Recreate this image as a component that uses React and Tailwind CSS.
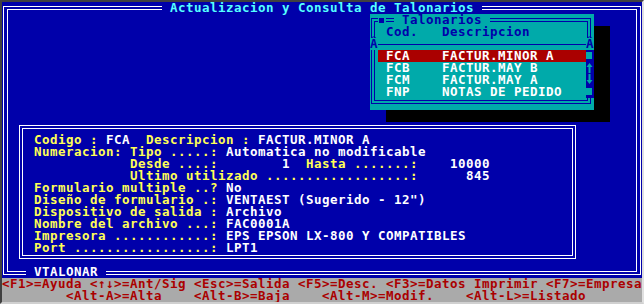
import React from "react";

const Y = "text-[#ffff55]";
const W = "text-white";

const detailRows = [
  [[Y, "Codigo : "], [W, "FCA"], [Y, "  Descripcion : "], [W, "FACTUR.MINOR A"]],
  [[Y, "Numeracion: Tipo .....: "], [W, "Automatica no modificable"]],
  [[Y, "            Desde ....: "], [W, "       1"], [Y, "  Hasta .......: "], [W, "   10000"]],
  [[Y, "            Ultimo utilizado ..................: "], [W, "     845"]],
  [[Y, "Formulario multiple ..? "], [W, "No"]],
  [[Y, "Diseño de formulario .: "], [W, 'VENTAEST (Sugerido - 12")']],
  [[Y, "Dispositivo de salida : "], [W, "Archivo"]],
  [[Y, "Nombre del archivo ...: "], [W, "FAC0001A"]],
  [[Y, "Impresora ............: "], [W, "EPS EPSON LX-800 Y COMPATIBLES"]],
  [[Y, "Port .................: "], [W, "LPT1"]],
];

const items = [
  ["FCA", "FACTUR.MINOR A"],
  ["FCB", "FACTUR.MAY B"],
  ["FCM", "FACTUR.MAY A"],
  ["FNP", "NOTAS DE PEDIDO"],
];

function Line({ segs }) {
  return (
    <div className="h-[12px] whitespace-pre">
      {segs.map(([c, t], i) => (
        <span key={i} className={c}>
          {t}
        </span>
      ))}
    </div>
  );
}

function ArrowUp() {
  return (
    <svg width="8" height="12" viewBox="0 0 8 12" className="block">
      <polygon points="3.5,1 0.5,5 6.5,5" fill="#00aaaa" />
      <rect x="2.5" y="4" width="2" height="7" fill="#00aaaa" />
    </svg>
  );
}

function ArrowDown() {
  return (
    <svg width="8" height="12" viewBox="0 0 8 12" className="block">
      <rect x="2.5" y="0" width="2" height="6" fill="#00aaaa" />
      <polygon points="3.5,10 0.5,6 6.5,6" fill="#00aaaa" />
    </svg>
  );
}

function Popup() {
  return (
    <div className="absolute left-[368px] top-[12px] w-[224px] h-[96px] bg-[#00aaaa] shadow-[16px_12px_0_0_#000] pt-[4px] pl-[1px] pr-[3px] pb-[6px] text-[#0000aa]">
      <div className="h-full border border-[#0000aa] p-[2px]">
        <div className="h-full border border-[#0000aa] pt-[4px] flex flex-col">
          <div className="ml-[3px] h-[12px] whitespace-pre"> Cod.   Descripcion</div>
          <div className="h-[12px] flex items-start pt-[6px]">
            <div className="h-px w-full bg-[#0000aa]" />
          </div>
          {items.map(([c, d], i) => (
            <div
              key={c}
              className={
                "ml-[3px] h-[12px] whitespace-pre text-white " +
                (i === 0 ? "bg-[#aa0000]" : "")
              }
            >
              {" " + c + "    " + d}
            </div>
          ))}
        </div>
      </div>
      {/* close box on the top border */}
      <div className="absolute left-[8px] top-0 w-[8px] h-[12px] bg-[#00aaaa] pt-[4px] pl-[1px]">
        <div className="w-[5px] h-[5px] bg-[#0000aa]" />
      </div>
      {/* title on the top border */}
      <div className="absolute left-[24px] top-0 h-[12px] bg-[#00aaaa] whitespace-pre">
        {" Talonarios "}
      </div>
      {/* separator joints */}
      <div className="absolute left-0 top-[24px] w-[8px] h-[12px] bg-[#00aaaa] whitespace-pre">Â</div>
      <div className="absolute left-[216px] top-[24px] w-[8px] h-[12px] bg-[#00aaaa] whitespace-pre">Â</div>
      {/* scroll bar */}
      <div className="absolute left-[216px] top-[36px] w-[8px] h-[48px] bg-[#0000aa] flex flex-col">
        <div className="h-[12px] pt-[2px]">
          <div className="w-[6px] h-[7px] bg-[#00aaaa]" />
        </div>
        <ArrowUp />
        <ArrowDown />
        <div className="h-[12px] pt-[2px]">
          <div className="w-[6px] h-[7px] bg-[#00aaaa]" />
        </div>
      </div>
    </div>
  );
}

export default function App() {
  return (
    <div className="w-[644px] h-[304px] border-2 border-t-[#404040] border-l-[#404040] border-r-[#e0e0e0] border-b-[#d0d0d0] bg-[#0000aa] font-['DejaVu_Sans_Mono',monospace] font-bold text-[12.5px] tracking-[0.474px] leading-[12px] overflow-hidden">
      <div className="flex flex-col w-[640px] h-[300px]">
        {/* main window rows 0-22 */}
        <div className="relative h-[276px] pt-[4px] px-[1px] pb-[3px]">
          <div className="h-full border border-white py-[2px] px-[3px]">
            <div className="h-full border border-white">
              <div className="ml-[11px] mt-[115px] w-[557px] h-[134px] border border-white p-[2px]">
                <div className="h-full border border-white pl-[11px] pt-[5px] flex flex-col">
                  {detailRows.map((segs, i) => (
                    <Line key={i} segs={segs} />
                  ))}
                </div>
              </div>
            </div>
          </div>
          <div className="absolute left-[160px] top-0 h-[12px] bg-[#0000aa] text-[#55ffff] whitespace-pre">
            {" Actualizacion y Consulta de Talonarios "}
          </div>
          <div className="absolute left-[24px] top-[264px] h-[12px] bg-[#0000aa] text-white whitespace-pre">
            {" VTALONAR "}
          </div>
          <Popup />
        </div>
        {/* status bar rows 23-24 */}
        <div className="h-[24px] bg-[#aaaaaa] text-[#aa0000] whitespace-pre flex flex-col">
          <div className="h-[12px]">
            {"<F1>=Ayuda <↑↓>=Ant/Sig <Esc>=Salida <F5>=Desc. <F3>=Datos Imprimir <F7>=Empresa"}
          </div>
          <div className="h-[12px]">
            {"        <Alt-A>=Alta    <Alt-B>=Baja    <Alt-M>=Modif.    <Alt-L>=Listado"}
          </div>
        </div>
      </div>
    </div>
  );
}
